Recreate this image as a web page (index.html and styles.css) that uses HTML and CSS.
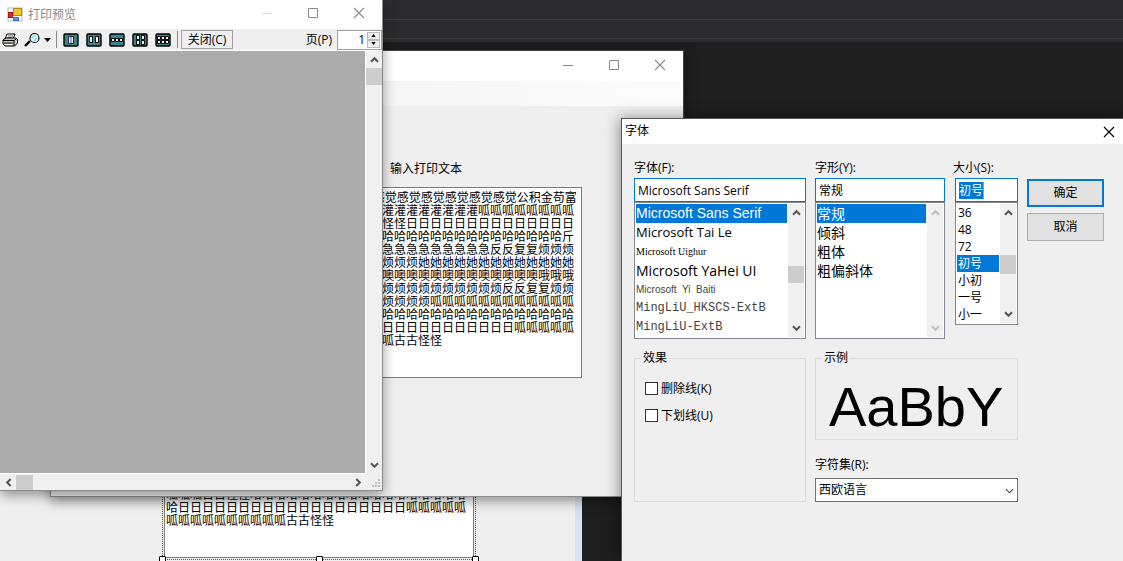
FILE: index.html
```html
<!DOCTYPE html>
<html lang="zh-CN">
<head>
<meta charset="utf-8">
<title>打印预览</title>
<link rel="stylesheet" href="styles.css">
</head>
<body>
<svg class="defs" aria-hidden="true">
  <symbol id="up" viewBox="0 0 10 8"><path d="M1 6.500L5 2.500l4 4" fill="none" stroke="currentColor" stroke-width="2.300"/></symbol>
  <symbol id="down" viewBox="0 0 10 8"><path d="M1 1.500l4 4 4-4" fill="none" stroke="currentColor" stroke-width="2.300"/></symbol>
  <symbol id="left" viewBox="0 0 8 10"><path d="M6.500 1l-4 4 4 4" fill="none" stroke="currentColor" stroke-width="2.300"/></symbol>
  <symbol id="right" viewBox="0 0 8 10"><path d="M1.500 1l4 4-4 4" fill="none" stroke="currentColor" stroke-width="2.300"/></symbol>
  <symbol id="min" viewBox="0 0 12 12"><path d="M1 6.500h10" stroke="currentColor"/></symbol>
  <symbol id="max" viewBox="0 0 12 12"><path d="M1.500 1.500h9v9h-9z" fill="none" stroke="currentColor"/></symbol>
  <symbol id="close" viewBox="0 0 12 12"><path d="M1 1l10 10M11 1L1 11" fill="none" stroke="currentColor" stroke-width="1.100"/></symbol>
  <symbol id="page" viewBox="0 0 16 14"><rect x="1" y="1" width="14" height="12" rx="1" fill="#3f8587" stroke="#000" stroke-width="1.400"/></symbol>
</svg>
<main class="desktop">
  <div class="ide-bar"></div>
  <div class="ide-bar ide-bar-low"></div>

  <section class="designer" aria-label="设计器">
    <div class="selected-control">
      <textarea class="memo designer-memo" aria-label="文本" readonly>呱呱呱日日怪怪哈哈哈哈哈哈哈哈哈哈哈哈哈哈哈哈哈哈
哈日日日日日日日日日日日日日日日日日日日呱呱呱呱呱
呱呱呱呱呱呱呱呱呱呱古古怪怪</textarea>
      <i class="handle handle-left"></i><i class="handle handle-mid"></i><i class="handle handle-right"></i>
    </div>
  </section>

  <section class="window editor" aria-label="编辑">
    <header class="titlebar editor-title">
      <button class="caption" aria-label="最小化"><svg><use href="#min"/></svg></button>
      <button class="caption" aria-label="最大化"><svg><use href="#max"/></svg></button>
      <button class="caption" aria-label="关闭"><svg><use href="#close"/></svg></button>
    </header>
    <div class="menu-strip"></div>
    <div class="editor-body">
      <label class="memo-label" for="memo">输入打印文本</label>
      <textarea class="memo" id="memo" readonly> 感觉感觉感觉感觉感觉感觉感觉公积金苟富
灌灌灌灌灌灌灌灌灌灌灌呱呱呱呱呱呱呱呱
怪怪怪怪怪日日日日日日日日日日日日日日
哈哈哈哈哈哈哈哈哈哈哈哈哈哈哈哈哈哈斤
急急急急急急急急急急急急反反复复烦烦烦
烦烦烦烦烦烦她她她她她她她她她她她她她
噢噢噢噢噢噢噢噢噢噢噢噢噢噢噢噢哦哦哦
烦烦烦烦烦烦烦烦烦烦烦烦烦反反复复烦烦
烦烦烦烦烦烦烦呱呱呱呱呱呱呱呱呱呱呱呱
哈哈哈哈哈哈哈哈哈哈哈哈哈哈哈哈哈哈哈
日日日日日日日日日日日日日日呱呱呱呱呱
呱呱呱呱古古怪怪</textarea>
    </div>
  </section>

  <section class="window preview" aria-label="打印预览">
    <header class="titlebar">
      <svg class="app-icon" viewBox="0 0 16 16">
        <rect x="1" y="1" width="14" height="13" fill="#fff" stroke="#b5b5b5"/>
        <rect x="6.500" y="1.500" width="8" height="7" fill="#f7c52d" stroke="#b78a10"/>
        <rect x="1.500" y="5.500" width="4" height="5" fill="#c9302c" stroke="#9b1c1c"/>
        <rect x="6.500" y="10.500" width="5" height="3" fill="#5b96e8" stroke="#3a6fc4"/>
      </svg>
      <h1 class="title">打印预览</h1>
      <button class="caption faint" aria-label="最小化"><svg><use href="#min"/></svg></button>
      <button class="caption" aria-label="最大化"><svg><use href="#max"/></svg></button>
      <button class="caption" aria-label="关闭"><svg><use href="#close"/></svg></button>
    </header>
    <div class="toolbar">
      <button class="tool" aria-label="打印"><svg viewBox="0 0 16 14">
        <path d="M5 1h8l-2 5H3z" fill="#fff" stroke="#000"/><path d="M6 3h5M5 4.500h5" stroke="#777"/>
        <path d="M1 7l3-2h10l1.500 1.500V10l-3 3H3L1 11z" fill="#c9c9c9" stroke="#000"/>
        <path d="M1 7.500h11l3-2M12 8v5M2 10h9" fill="none" stroke="#000"/><path d="M3 11.500h7" stroke="#fff"/><path d="M9 9h2" stroke="#d6ce1c"/></svg></button>
      <button class="tool zoom" aria-label="缩放"><svg viewBox="0 0 16 14">
        <path d="M1 13l5-5" stroke="#000" stroke-width="2.400"/><circle cx="10.500" cy="5" r="4.500" fill="#fff" stroke="#000" stroke-width="1.100"/><path d="M7.500 5.500L11 2M10 8L13.500 4.500" stroke="#45e8ee" stroke-width="1.300"/></svg></button>
      <button class="arrow" aria-label="缩放选项"><svg viewBox="0 0 7 4"><path d="M0 0h7L3.500 4z"/></svg></button>
      <i class="separator"></i>
      <button class="tool" aria-label="一页"><svg viewBox="0 0 16 14"><use href="#page"/><path d="M5.500 3.500h5v7h-5z" fill="#fff" stroke="#226"/><path d="M7 5h2M7 7h2M7 9h2" stroke="#44449c"/></svg></button>
      <button class="tool" aria-label="两页"><svg viewBox="0 0 16 14"><use href="#page"/><path d="M3.500 3.500h3v6h-3zM9.500 3.500h3v6h-3z" fill="#fff" stroke="#000"/></svg></button>
      <button class="tool" aria-label="三页"><svg viewBox="0 0 16 14"><use href="#page"/><path d="M2.500 5.500h3v3h-3zM6.500 5.500h3v3h-3zM10.500 5.500h3v3h-3z" fill="#fff" stroke="#000"/></svg></button>
      <button class="tool" aria-label="四页"><svg viewBox="0 0 16 14"><use href="#page"/><path d="M4.500 2.500h3v4h-3zM9.500 2.500h3v4h-3zM4.500 7.500h3v4h-3zM9.500 7.500h3v4h-3z" fill="#fff" stroke="#000"/></svg></button>
      <button class="tool" aria-label="六页"><svg viewBox="0 0 16 14"><use href="#page"/><path d="M2.500 3.500h3v3h-3zM6.500 3.500h3v3h-3zM10.500 3.500h3v3h-3zM2.500 7.500h3v3h-3zM6.500 7.500h3v3h-3zM10.500 7.500h3v3h-3z" fill="#fff" stroke="#000"/></svg></button>
      <i class="separator last"></i>
      <button class="close-preview">关闭(C)</button>
      <label class="page-label" for="page-no">页(P)</label>
      <div class="spinner">
        <input id="page-no" type="text" value="1">
        <div class="spin-buttons">
          <button aria-label="增加"><svg viewBox="0 0 6 4"><path d="M0 4h6L3 0z"/></svg></button>
          <button aria-label="减少"><svg viewBox="0 0 6 4"><path d="M0 0h6L3 4z"/></svg></button>
        </div>
      </div>
    </div>
    <div class="preview-area">
      <div class="canvas"></div>
      <div class="vscroll">
        <button aria-label="向上"><svg class="chev"><use href="#up"/></svg></button>
        <i class="thumb"></i>
        <button class="end" aria-label="向下"><svg class="chev"><use href="#down"/></svg></button>
      </div>
      <div class="hscroll">
        <button aria-label="向左"><svg class="chev-h"><use href="#left"/></svg></button>
        <i class="thumb"></i>
        <button class="end" aria-label="向右"><svg class="chev-h"><use href="#right"/></svg></button>
      </div>
      <svg class="grip" viewBox="0 0 16 16"><path d="M12 5h2v2h-2zM9 8h2v2H9zM12 8h2v2h-2zM6 11h2v2H6zM9 11h2v2H9zM12 11h2v2h-2z" fill="#bdbdbd"/></svg>
    </div>
  </section>

  <section class="window font-dialog" role="dialog" aria-labelledby="font-title">
    <header class="dialog-title">
      <h2 id="font-title">字体</h2>
      <button class="caption dark" aria-label="关闭"><svg><use href="#close"/></svg></button>
    </header>
    <div class="dialog-body">
      <div class="field">
        <label for="font-name">字体(F):</label>
        <input id="font-name" type="text" value="Microsoft Sans Serif">
        <div class="listbox">
          <ul role="listbox" aria-label="字体">
            <li class="sans selected" role="option" aria-selected="true">Microsoft Sans Serif</li>
            <li class="taile" role="option">Microsoft Tai Le</li>
            <li class="uighur" role="option">Microsoft Uighur</li>
            <li class="yahei" role="option">Microsoft YaHei UI</li>
            <li class="baiti" role="option">Microsoft&nbsp; Yi&nbsp; Baiti</li>
            <li class="ming" role="option">MingLiU_HKSCS-ExtB</li>
            <li class="ming" role="option">MingLiU-ExtB</li>
          </ul>
          <div class="vscroll list-scroll">
            <button aria-label="向上"><svg class="chev"><use href="#up"/></svg></button>
            <i class="thumb font-thumb"></i>
            <button class="end" aria-label="向下"><svg class="chev"><use href="#down"/></svg></button>
          </div>
        </div>
      </div>
      <div class="field">
        <label for="font-style">字形(Y):</label>
        <input id="font-style" type="text" value="常规">
        <div class="listbox">
          <ul class="styles" role="listbox" aria-label="字形">
            <li class="selected" role="option" aria-selected="true">常规</li>
            <li role="option">倾斜</li>
            <li role="option">粗体</li>
            <li role="option">粗偏斜体</li>
          </ul>
          <div class="vscroll list-scroll disabled">
            <button aria-label="向上" disabled><svg class="chev"><use href="#up"/></svg></button>
            <button class="end" aria-label="向下" disabled><svg class="chev"><use href="#down"/></svg></button>
          </div>
        </div>
      </div>
      <div class="field size-field">
        <label for="font-size">大小(S):</label>
        <div class="size-input"><span class="highlight"><input id="font-size" type="text" value="初号"></span></div>
        <div class="listbox short">
          <ul class="sizes" role="listbox" aria-label="大小">
            <li role="option">36</li>
            <li role="option">48</li>
            <li role="option">72</li>
            <li class="selected" role="option" aria-selected="true">初号</li>
            <li role="option">小初</li>
            <li role="option">一号</li>
            <li role="option">小一</li>
          </ul>
          <div class="vscroll list-scroll">
            <button aria-label="向上"><svg class="chev"><use href="#up"/></svg></button>
            <i class="thumb size-thumb"></i>
            <button class="end" aria-label="向下"><svg class="chev"><use href="#down"/></svg></button>
          </div>
        </div>
      </div>
      <div class="actions">
        <button class="push default">确定</button>
        <button class="push">取消</button>
      </div>
      <fieldset class="effects">
        <legend>效果</legend>
        <label><input type="checkbox">删除线(K)</label>
        <label><input type="checkbox">下划线(U)</label>
      </fieldset>
      <div class="sample-column">
        <fieldset class="sample">
          <legend>示例</legend>
          <div class="sample-text">AaBbY</div>
        </fieldset>
        <label for="charset">字符集(R):</label>
        <div class="charset">
          <select id="charset"><option>西欧语言</option></select>
          <svg viewBox="0 0 10 6"><path d="M1 1l4 4 4-4" fill="none" stroke="#444" stroke-width="1.200"/></svg>
        </div>
      </div>
    </div>
  </section>
</main>
</body>
</html>
```
FILE: styles.css
```css
* { box-sizing: border-box; }
body {
  margin: 0;
  color: #000;
  font: 12px/16px "Open Sans", "Noto Sans CJK SC", sans-serif;
}
button, input, select, textarea { font: inherit; color: inherit; margin: 0; padding: 0; border: 0; outline: 0; }
button { background: none; display: flex; align-items: center; justify-content: center; }
h1, h2, ul { margin: 0; padding: 0; font: inherit; list-style: none; }
.defs { display: none; }

.desktop { position: relative; height: 100vh; overflow: hidden; background: #1e1e1e; }
.ide-bar { height: 20px; background: #2b2b2d; border-bottom: 1px solid #3b3b3e; }
.ide-bar-low { height: 22px; border-bottom: 3px solid #2d2d30; box-shadow: inset 0 -1px #3b3b3e; }

.window { position: absolute; display: flex; flex-direction: column; background: #efefef; }

/* Form designer behind the running windows */
.designer {
  position: absolute; left: 0; top: 440px; bottom: 0; width: 582px;
  background: #efefef; border-right: 7px solid #d6e4f1;
}
.selected-control {
  position: absolute; left: 162px; top: 0; width: 314px; height: 120px;
  padding: 1px; border: 1px dotted #555;
}
.memo {
  display: block; resize: none; overflow: hidden; white-space: pre;
  background: #fff; border: 1px solid #7a7a7a;
  font: 12px/13px "Noto Sans CJK SC", sans-serif;
}
.designer-memo { width: 100%; height: 100%; padding: 44px 0 0 1px; }
.handle { position: absolute; bottom: -4px; width: 7px; height: 7px; background: #fff; border: 1px solid #000; border-radius: 1px; }
.handle-left { left: -4px; }
.handle-mid { left: 153px; }
.handle-right { right: -4px; }

/* Shared caption bar */
.titlebar { display: flex; align-items: center; height: 29px; background: #fff; color: #8a8a8a; }
.caption { width: 46px; height: 26px; color: #8a8a8a; }
.titlebar .caption { align-self: flex-start; }
.caption svg { width: 12px; height: 12px; }
.caption.faint { color: #ddd; }
.caption.dark { color: #000; width: 28px; height: 24px; }

/* Editor window */
.editor {
  left: 50px; top: 50px; width: 634px; height: 447px;
  border: 1px solid #8c8c8c; border-top-color: #444; border-right-color: #444;
  box-shadow: 0 4px 12px rgba(0, 0, 0, .4);
}
.editor-title { justify-content: flex-end; height: 30px; }
.editor-title .caption { height: 28px; }
.menu-strip { height: 25px; background: linear-gradient(90deg, #f5f5f5 50%, #fcfcfc); }
.editor-body { display: flex; flex-direction: column; padding: 52px 101px 0 293px; }
.memo-label { align-self: flex-start; margin-left: 46px; font: 12px/20px "Noto Sans CJK SC", sans-serif; }
.editor .memo { width: 100%; height: 191px; margin-top: 9px; padding: 2px 1px; }

/* Print preview window */
.preview {
  left: 0; top: 0; width: 383px; height: 491px;
  border: solid #8c8c8c; border-width: 0 1px 1px 0;
  box-shadow: 0 4px 12px rgba(0, 0, 0, .4);
}
.app-icon { width: 16px; height: 16px; margin-left: 7px; }
.title { flex: 1; margin-left: 5px; }
.toolbar { display: flex; align-items: center; height: 21px; padding-left: 2px; }
.tool { width: 16px; height: 20px; margin-right: 7px; }
.tool svg { width: 16px; height: 14px; }
.tool.zoom { margin-right: 3px; margin-left: -1px; }
.arrow { width: 9px; }
.arrow svg { width: 7px; height: 4px; }
.separator { width: 1px; height: 17px; margin: 0 6px 0 4px; background: #888; }
.separator.last { margin: 0 3px 0 -1px; }
.close-preview { height: 19px; width: 52px; border: 1px solid #a0a0a0; }
.page-label { margin-left: auto; margin-right: 5px; }
.spinner { display: flex; width: 45px; height: 20px; padding: 1px; background: #fff; border: 1px solid #a0a0a0; }
.spinner input { width: 26px; text-align: right; background: none; line-height: 16px; height: 16px; }
.spin-buttons { display: flex; flex-direction: column; flex: 1; margin-left: 2px; }
.spin-buttons button { flex: 1; background: #efefef; border: 1px solid #bbb; }
.spin-buttons svg { width: 5px; height: 3px; }
.preview-area {
  flex: 1; display: grid; grid-template: 1fr 16px / 1fr 16px;
  border-top: 1px solid #fff;
}
.canvas { background: #ababab; border: solid #fff; border-width: 0 1px 1px 0; background-clip: padding-box; }
.vscroll, .hscroll { display: flex; background: #f0f0f0; color: #555; }
.vscroll { flex-direction: column; }
.vscroll button { height: 17px; width: 100%; }
.hscroll button { width: 16px; height: 100%; }
.vscroll .thumb { height: 17px; background: #cdcdcd; }
.hscroll .thumb { width: 17px; margin-top: 1px; background: #cdcdcd; }
.vscroll .end { margin-top: auto; }
.hscroll .end { margin-left: auto; }
.chev { width: 9px; height: 7px; }
.chev-h { width: 7px; height: 9px; }
.grip { width: 16px; height: 16px; }

/* Font dialog */
.font-dialog {
  left: 621px; right: 0; top: 118px; bottom: 0;
  border: solid #555; border-width: 1px 0 0 1px;
  box-shadow: -2px 0 14px rgba(0, 0, 0, .4);
}
.dialog-title { display: flex; justify-content: space-between; align-items: center; height: 25px; padding-left: 3px; background: #fff; }
.dialog-title h2 { padding-bottom: 2px; }
.dialog-body {
  display: grid; grid-template-columns: 172px 130px 64px 77px;
  gap: 11px 9px; align-items: start; padding: 14px 12px;
}
.field { display: flex; flex-direction: column; }
.field label { line-height: 20px; }
.size-field { padding-left: 1px; }
.size-field label { margin-left: -2px; }
.field > input, .size-input { width: 100%; height: 24px; padding: 0 3px; background: #fff; border: 1px solid #0078d7; }
.size-input { display: flex; align-items: center; }
.highlight { width: 25px; height: 17px; background: #0078d7; border-right: 1px solid #f28a30; color: #fff; }
.highlight input { width: 24px; height: 17px; background: none; display: block; }
.listbox { display: flex; height: 137px; padding: 1px; background: #fff; border: 1px solid #828790; }
.listbox.short { height: 123px; }
.listbox ul { flex: 1; min-width: 0; overflow: hidden; }
.listbox li { height: 19px; line-height: 19px; white-space: nowrap; }
.listbox .selected { background: #0078d7; color: #fff; }
.list-scroll { width: 16px; margin-left: 1px; }
.list-scroll.disabled { color: #bfbfbf; }
.font-thumb { margin-top: 45px; }
.vscroll .size-thumb { height: 19px; margin-top: 34px; }
.sans { font: 14px "Liberation Sans", sans-serif; }
.taile { font-size: 13px; }
.uighur { font: 10px "Liberation Serif", serif; }
.yahei { font-size: 14px; }
.baiti { font: 10px "Liberation Sans", sans-serif; color: #444; }
.ming { font: 12px "Liberation Mono", monospace; color: #444; }
.styles { font-size: 14px; }
.listbox .sizes li { height: 17px; line-height: 17px; padding-left: 1px; }
.actions { display: flex; flex-direction: column; gap: 6px; padding-top: 21px; }
.push { width: 77px; height: 28px; background: #e1e1e1; border: 1px solid #adadad; }
.push.default { border: 2px solid #0078d7; }

fieldset { min-width: 0; margin: 0; border: 1px solid #dcdcdc; }
legend { margin-left: 6px; padding: 0 2px; line-height: 16px; }
.effects { height: 152px; padding: 9px 10px; }
.effects legend { margin-left: -4px; }
.effects label { display: flex; align-items: center; gap: 3px; height: 27px; }
.effects input { appearance: none; width: 13px; height: 13px; background: #fff; border: 1px solid #333; }
.sample-column { grid-column: 2 / 4; display: flex; flex-direction: column; }
.sample-column > label { margin-top: 15px; line-height: 20px; }
.sample { height: 90px; padding: 0 13px; }
.sample legend { margin-left: -7px; }
.sample-text { font: 56px/82px "Liberation Sans", sans-serif; }
.charset { position: relative; margin-top: 3px; }
.charset select { appearance: none; display: block; width: 100%; height: 24px; padding: 0 3px; background: #fff; border: 1px solid #707070; border-radius: 0; }
.charset svg { position: absolute; right: 4px; top: 10px; width: 9px; height: 6px; pointer-events: none; }
```
